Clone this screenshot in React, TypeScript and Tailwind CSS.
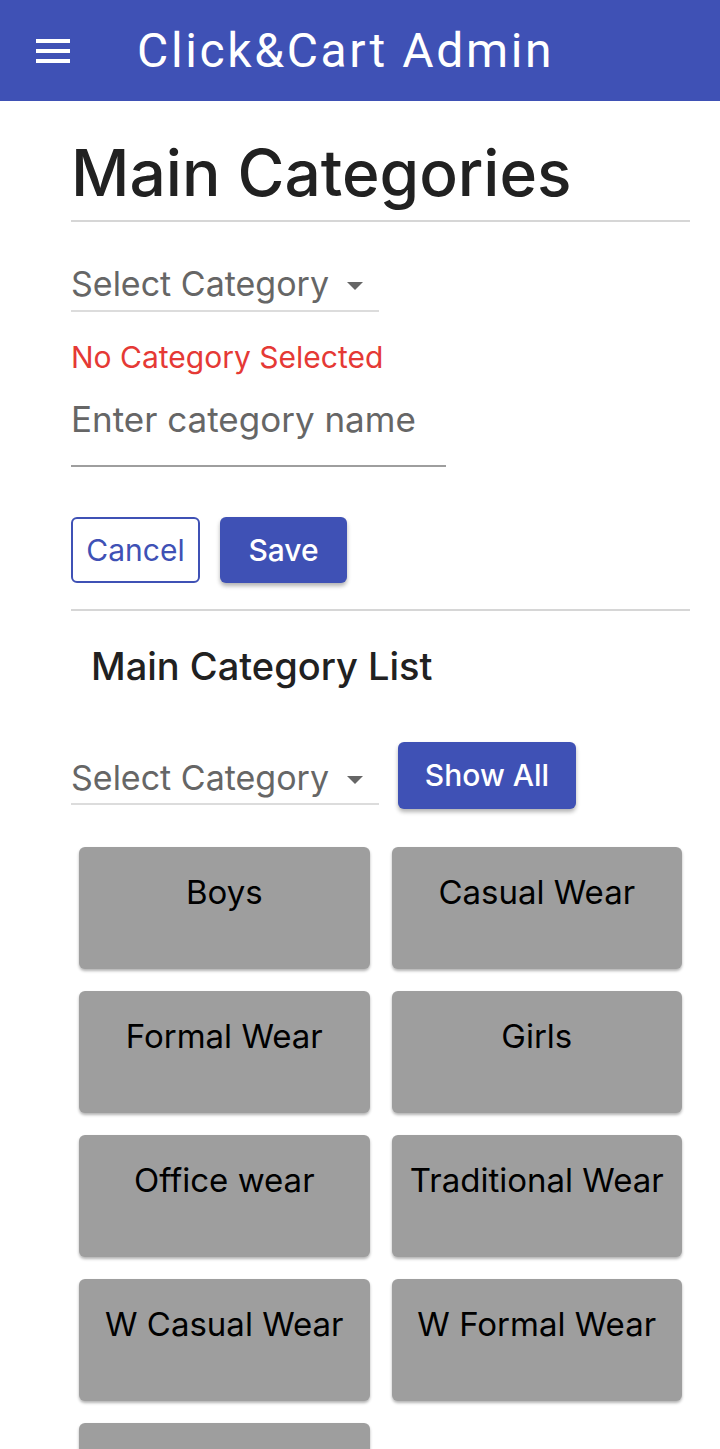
import { useState } from "react";

const categories = [
  "Boys",
  "Casual Wear",
  "Formal Wear",
  "Girls",
  "Office wear",
  "Traditional Wear",
  "W Casual Wear",
  "W Formal Wear",
  "",
];

function SelectBox() {
  return (
    <div className="w-[308px] border-b-2 border-[#dcdcdc] flex items-center justify-between pr-4 pb-[4px]">
      <span className="text-[34px] text-[#666666] leading-tight">Select Category</span>
      <svg width="16" height="8" viewBox="0 0 16 8" className="mt-1">
        <path d="M0 0 L16 0 L8 8 Z" fill="#666666" />
      </svg>
    </div>
  );
}

export default function App() {
  const [name, setName] = useState("");

  return (
    <div className="min-h-[1449px] bg-white" style={{ fontFamily: "Inter, 'Noto Sans', sans-serif" }}>
      {/* top bar */}
      <header className="h-[101px] bg-[#3f51b5] flex items-center">
        <button className="ml-[36px] flex flex-col gap-[6px]">
          <span className="block w-[34px] h-[4px] bg-white" />
          <span className="block w-[34px] h-[4px] bg-white" />
          <span className="block w-[34px] h-[4px] bg-white" />
        </button>
        <h1
          className="ml-[67px] text-white text-[48px] tracking-[0.055em]"
          style={{ fontFamily: "Roboto, 'Liberation Sans', sans-serif" }}
        >
          Click&amp;Cart Admin
        </h1>
      </header>

      <main className="px-[71px] pr-[30px]">
        <h2 className="text-[64px] text-[#212121] font-medium leading-none pt-[40px] pb-[15px]">
          Main Categories
        </h2>
        <hr className="border-t-2 border-[#d6d6d6]" />

        <div className="mt-[41px]">
          <SelectBox />
        </div>

        <p className="mt-[30px] text-[30px] text-[#e53935] leading-none">No Category Selected</p>

        <input
          value={name}
          onChange={(e) => setName(e.target.value)}
          placeholder="Enter category name"
          className="mt-[26px] w-[375px] border-b-2 border-[#9e9e9e] pb-[24px] text-[35px] leading-tight text-[#333] placeholder:text-[#666666] outline-none"
        />

        <div className="mt-[50px] flex gap-[20px]">
          <button className="h-[66px] w-[129px] rounded-md border-2 border-[#3f51b5] text-[#3f51b5] text-[30px]">
            Cancel
          </button>
          <button className="h-[66px] w-[127px] rounded-md bg-[#3f51b5] text-white text-[30px] font-medium shadow-[0_3px_4px_rgba(0,0,0,0.3)]">
            Save
          </button>
        </div>

        <hr className="mt-[26px] border-t-2 border-[#d6d6d6]" />

        <h3 className="mt-[36px] ml-[20px] text-[38px] text-[#212121] font-medium leading-none">
          Main Category List
        </h3>

        <div className="mt-[57px] flex items-end gap-[19px]">
          <SelectBox />
          <button className="h-[67px] w-[178px] mb-[-4px] rounded-md bg-[#3f51b5] text-white text-[30px] font-medium shadow-[0_3px_4px_rgba(0,0,0,0.3)]">
            Show All
          </button>
        </div>

        <div className="mt-[42px] px-[8px] grid grid-cols-2 gap-x-[22px] gap-y-[22px]">
          {categories.map((c, i) => (
            <div
              key={i}
              className="h-[122px] rounded-md bg-[#9e9e9e] shadow-[0_2px_3px_rgba(0,0,0,0.3)] pt-[25px] text-center text-[33px] text-black leading-tight"
            >
              {c}
            </div>
          ))}
        </div>
      </main>
    </div>
  );
}
